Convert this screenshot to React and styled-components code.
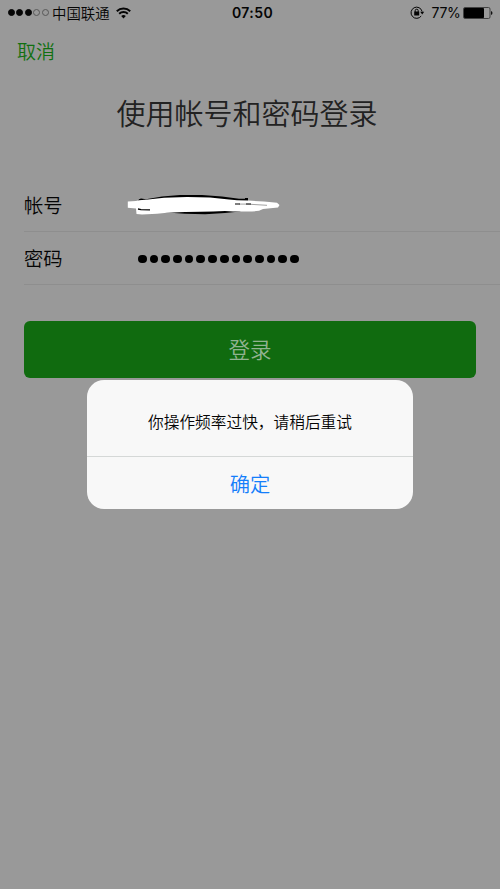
import React from 'react';
import styled, { createGlobalStyle } from 'styled-components';

const GlobalStyle = createGlobalStyle`
  * {
    box-sizing: border-box;
  }

  body {
    margin: 0;
    background: #999999;
    font-family: 'Noto Sans CJK SC', sans-serif;
    font-weight: 350;
    overflow: hidden;
  }

  button {
    border: none;
    margin: 0;
    padding: 0;
    background: none;
    font-family: inherit;
    font-weight: inherit;
  }
`;

const Screen = styled.main`
  position: relative;
  width: 500px;
  height: 889px;
  background: #999999;
  overflow: hidden;
`;

const StatusBar = styled.header`
  display: grid;
  grid-template-columns: 1fr auto 1fr;
  align-items: center;
  height: 25px;
  padding: 0 7px 0 8px;
  color: #050505;
`;

const StatusGroup = styled.div`
  display: flex;
  align-items: center;
  justify-content: ${props => props.$end ? 'flex-end' : 'flex-start'};
`;

const Signal = styled.div`
  display: flex;
  gap: 1.4px;
  margin-right: 3.5px;
`;

const SignalDot = styled.i`
  width: 7px;
  height: 7px;
  border-radius: 50%;
  border: 1px solid ${props => props.$filled ? '#050505' : '#585858'};
  background: ${props => props.$filled ? '#050505' : 'transparent'};
`;

const Carrier = styled.span`
  font-size: 14.4px;
  line-height: 24px;
  margin-right: 6.5px;
`;

const Clock = styled.time`
  padding-left: 4px;
  font-family: Inter, sans-serif;
  font-size: 14px;
  font-weight: 600;
  letter-spacing: 0.4px;
  line-height: 24px;
`;

const BatteryLevel = styled.span`
  font-family: Inter, sans-serif;
  font-size: 14px;
  font-weight: 400;
  letter-spacing: -0.3px;
  line-height: 24px;
  margin: 0 2.5px 0 7px;
`;

const NavBar = styled.nav`
  display: flex;
  align-items: center;
  height: 52px;
  padding-left: 17px;
`;

const CancelButton = styled.button`
  color: #107010;
  font-size: 19px;
  line-height: 28px;
`;

const Title = styled.h1`
  margin: 14px 0 45px;
  padding-right: 6px;
  color: #222222;
  font-size: 29px;
  font-weight: 350;
  line-height: 43px;
  text-align: center;
`;

const Field = styled.div`
  display: flex;
  align-items: center;
  height: 53px;
  margin-left: 24px;
  border-bottom: 1px solid #8e8e8e;
`;

const FieldLabel = styled.span`
  width: 103px;
  color: #050505;
  font-size: 19.3px;
  line-height: 28px;
`;

const Password = styled.div`
  display: flex;
  gap: 3px;
  margin-left: 11px;
  padding-top: 2px;
`;

const PasswordDot = styled.i`
  width: 8.7px;
  height: 8.7px;
  border-radius: 50%;
  background: #000000;
`;

const LoginButton = styled.button`
  display: block;
  width: 452px;
  height: 57px;
  margin: 36px 24px 0;
  padding-bottom: 2px;
  border-radius: 6px;
  background: #106b0f;
  color: #92b391;
  font-size: 21.5px;
  line-height: 55px;
`;

const Dialog = styled.section`
  position: absolute;
  top: 380px;
  left: 87px;
  display: flex;
  flex-direction: column;
  width: 326px;
  height: 129px;
  border-radius: 17px;
  background: #f8f8f8;
  overflow: hidden;
`;

const Message = styled.p`
  height: 76px;
  margin: 0;
  padding-top: 6px;
  color: #050505;
  font-size: 15.7px;
  line-height: 71px;
  text-align: center;
`;

const ConfirmButton = styled.button`
  flex: 1;
  border-top: 1px solid #d5d8d7;
  color: #147efb;
  font-size: 20.3px;
  line-height: 52px;
`;

const WifiIcon = () => (
  <svg width="15" height="12" viewBox="0 0 15 12" fill="none" stroke="#050505" strokeWidth="2">
    <path d="M0.8 4.2a9.6 9.6 0 0 1 13.4 0" />
    <path d="M3.2 6.8a6.1 6.1 0 0 1 8.6 0" />
    <path d="M7.5 11.5 5.2 9a3.4 3.4 0 0 1 4.6 0Z" fill="#050505" stroke="none" />
  </svg>
);

const RotationLockIcon = () => (
  <svg width="15" height="13" viewBox="0 0 15 13" fill="none" stroke="#050505">
    <path d="M11.2 10A5.6 5.6 0 1 1 12.1 5.5" strokeWidth="1" />
    <path d="M10.2 5.8h4l-2 2.8Z" fill="#050505" stroke="none" />
    <path d="M5.2 6V4.7a1.5 1.5 0 0 1 3 0V6" strokeWidth="1" />
    <path d="M4.2 5.5h5v4h-5Z" fill="#050505" stroke="none" />
  </svg>
);

const BatteryIcon = () => (
  <svg width="30" height="12" viewBox="0 0 30 12">
    <rect x="0.5" y="0.5" width="26.5" height="11" rx="1.5" fill="none" stroke="#424242" />
    <rect x="1" y="1" width="20" height="10" rx="0.8" fill="#000000" />
    <path d="M28 4q1.5 .4 1.5 2t-1.5 2Z" fill="#111111" />
  </svg>
);

// Brush strokes that hide the account name
const Scribble = () => (
  <svg width="154" height="22" viewBox="0 0 154 22">
    <path
      d="M11 7 12 5.2 14 4.6 19 5.2 35 2.4 53 1 75 1 95 2.6 112 4.8 118 4.8 118 4 121 4 121 6.5 121 12 113 17.5 98 19 78 20.2 58 19.8 40 18.5 20 17Z"
      fill="#000000"
    />
    <path
      d="M.8 7.5 9 7 12 6.2 21 5.4 37 3.8 60 3 83 3.6 102 5.4 110 6.3 121 6.6 137 7.6 150 8.8 152.5 11 151 13.4 136 15 132 16.8 125 17.6 106 17.6 98 17 86 17.4 73 17.8 58 18 40 18.8 30 19.8 15 20.6 9.5 20 9 14.5 .8 13.8Z"
      fill="#ffffff"
    />
    <path d="M108 9.6 113 9.6 113 10.5 108 10.5ZM119 9.5 124 9.5 124 10.6 119 10.6Z" fill="#000000" />
    <path d="M112 10.1H120L140 11.3" fill="none" stroke="#444444" strokeWidth="0.5" />
    <path d="M11 15 14 15.6 23 15.8" fill="none" stroke="#000000" strokeWidth="1.3" />
  </svg>
);

const App = () => {
  return (
    <>
      <GlobalStyle />
      <Screen>
        <StatusBar>
          <StatusGroup>
            <Signal>
              {[true, true, true, false, false].map((filled, index) => (
                <SignalDot key={index} $filled={filled} />
              ))}
            </Signal>
            <Carrier>中国联通</Carrier>
            <WifiIcon />
          </StatusGroup>
          <Clock>07:50</Clock>
          <StatusGroup $end>
            <RotationLockIcon />
            <BatteryLevel>77%</BatteryLevel>
            <BatteryIcon />
          </StatusGroup>
        </StatusBar>
        <NavBar>
          <CancelButton>取消</CancelButton>
        </NavBar>
        <Title>使用帐号和密码登录</Title>
        <Field>
          <FieldLabel>帐号</FieldLabel>
          <Scribble />
        </Field>
        <Field>
          <FieldLabel>密码</FieldLabel>
          <Password>
            {Array.from({ length: 14 }, (_, index) => (
              <PasswordDot key={index} />
            ))}
          </Password>
        </Field>
        <LoginButton>登录</LoginButton>
        <Dialog role="alertdialog">
          <Message>你操作频率过快，请稍后重试</Message>
          <ConfirmButton>确定</ConfirmButton>
        </Dialog>
      </Screen>
    </>
  );
};

export default App;
